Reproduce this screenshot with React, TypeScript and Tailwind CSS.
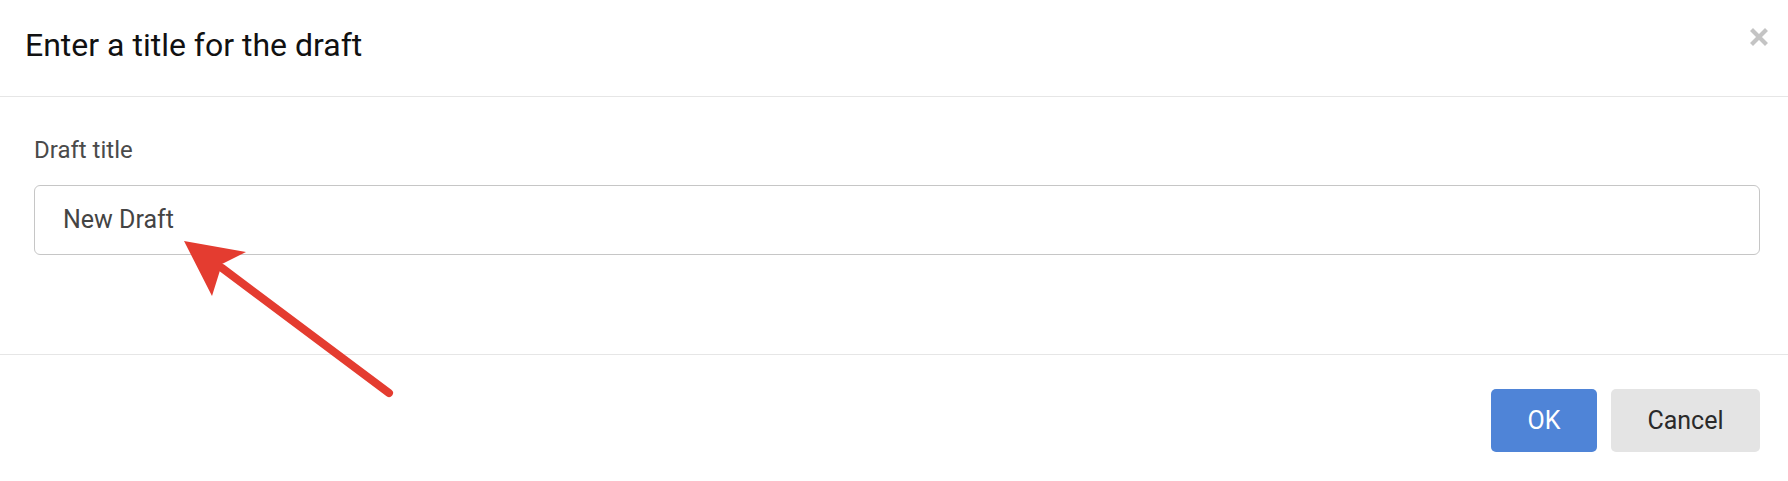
import React from "react";

export default function App() {
  return (
    <div
      className="relative w-[1788px] h-[481px] bg-white overflow-hidden"
      style={{ fontFamily: "Roboto, 'Noto Sans', sans-serif" }}
    >
      <div className="flex items-start justify-between h-[97px] border-b border-[#e6e6e6] pl-[25px] pr-[20px]">
        <h1 className="mt-[25px] text-[32px] leading-[40px] text-[#111]">Enter a title for the draft</h1>
        <button className="mt-[28px] w-[18px] h-[18px]" aria-label="Close">
          <svg width="18" height="18" viewBox="0 0 18 18">
            <path d="M3 3 L15 15 M15 3 L3 15" stroke="#c4c4c4" strokeWidth="4.2" strokeLinecap="square" />
          </svg>
        </button>
      </div>
      <div className="pl-[34px] pr-[28px] pt-[37px] pb-[99px] border-b border-[#e6e6e6]">
        <label className="block text-[24px] leading-[32px] text-[#4a4a4a]">Draft title</label>
        <div className="mt-[19px] h-[70px] rounded-[6px] border border-[#c6c6c6] flex items-center pl-[28px] text-[25px] text-[#444]">
          New Draft
        </div>
      </div>
      <div className="flex justify-end gap-[14px] pt-[34px] pr-[28px]">
        <button className="w-[106px] h-[63px] rounded-[5px] bg-[#4f84d7] text-white text-[25px]">OK</button>
        <button className="w-[149px] h-[63px] rounded-[5px] bg-[#e4e4e4] text-[#2a2a2a] text-[25px]">Cancel</button>
      </div>
      <svg className="absolute left-0 top-0 pointer-events-none" width="1788" height="481">
        <line x1="222" y1="268" x2="389" y2="393" stroke="#e43c30" strokeWidth="8" strokeLinecap="round" />
        <path d="M184 241 L246 252 L222 264 L212 296 Z" fill="#e43c30" />
      </svg>
    </div>
  );
}
